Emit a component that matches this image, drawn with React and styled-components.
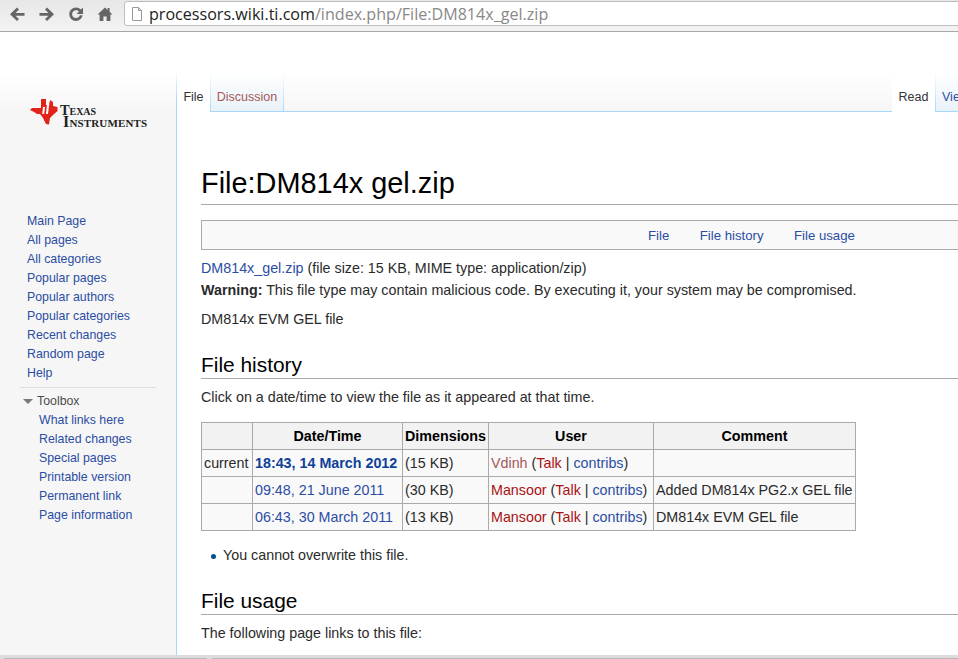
import React from 'react';
import styled, { createGlobalStyle } from 'styled-components';

const GlobalStyle = createGlobalStyle`
	html, body {
		margin: 0;
		padding: 0;
		background: #fff;
	}
`;

const Page = styled.div`
	display: flex;
	flex-direction: column;
	width: 958px;
	height: 659px;
	overflow: hidden;
	font-family: "Liberation Sans", Arial, sans-serif;
	font-size: 14.3px;
	color: #2a2a2a;
`;

const Toolbar = styled.div`
	display: flex;
	align-items: center;
	flex: none;
	height: 32px;
	box-sizing: border-box;
	padding: 0 0 4px 9px;
	background: linear-gradient(#e7e7e7, #f3f3f3);
	border-bottom: 1px solid #a8a8a8;
`;

const ToolButton = styled.svg`
	flex: none;
	width: 16px;
	height: 16px;
	margin-right: ${p => p.$gap}px;
	fill: #666;
`;

const AddressBar = styled.div`
	display: flex;
	align-items: center;
	flex: 1;
	height: 25px;
	box-sizing: border-box;
	padding-left: 6px;
	margin-right: -6px;
	background: #fff;
	border: 1px solid #bdbdbd;
	border-radius: 3px;
`;

const PageIcon = styled.svg`
	flex: none;
	width: 12px;
	height: 14px;
	margin-right: 6px;
`;

const Url = styled.span`
	font-family: "Open Sans", sans-serif;
	font-size: 16.1px;
	color: #888;
	white-space: nowrap;
`;

const Host = styled.span`
	color: #222;
`;

const Body = styled.div`
	display: flex;
	flex: 1;
	min-height: 0;
`;

const Sidebar = styled.div`
	flex: none;
	width: 177px;
	padding-top: 65px;
	box-sizing: border-box;
	background: linear-gradient(#fff 40px, #f6f6f6 80px);
	border-right: 1px solid #a7d7f9;
	border-image: linear-gradient(#fff 38px, #a7d7f9 70px) 1;
`;

const Logo = styled.div`
	display: flex;
	align-items: center;
	height: 32px;
	padding-left: 30px;
	margin-bottom: 83px;
`;

const LogoMark = styled.svg`
	flex: none;
	width: 29px;
	height: 27px;
	margin-top: -3px;
`;

const LogoText = styled.div`
	margin: 5px 0 0 1px;
	font-family: "Liberation Serif", serif;
	font-weight: bold;
	font-variant: small-caps;
	line-height: 12px;
	color: #222;
	white-space: nowrap;
`;

const LogoLine = styled.div`
	margin-left: ${p => p.$indent}px;
	font-size: ${p => p.$size}px;
	letter-spacing: ${p => p.$track}px;
`;

const NavList = styled.div`
	display: flex;
	flex-direction: column;
	padding-left: ${p => p.$indent}px;
`;

const NavLink = styled.a`
	height: 19px;
	font-size: 12.35px;
	line-height: 19px;
	color: #2b4da3;
	white-space: nowrap;
`;

const Divider = styled.div`
	height: 1px;
	margin: 4px 20px 5px 20px;
	background: #dedede;
`;

const ToolboxHead = styled.div`
	display: flex;
	align-items: center;
	height: 16px;
	padding: 0 0 2px 23px;
	font-size: 12.35px;
	color: #4d4d4d;
`;

const Arrow = styled.span`
	width: 0;
	height: 0;
	margin: 1px 4px 0 0;
	border-top: 5px solid #797979;
	border-left: 5px solid transparent;
	border-right: 5px solid transparent;
`;

const Main = styled.div`
	flex: none;
	width: 1100px;
`;

const Tabs = styled.div`
	display: flex;
	align-items: flex-end;
	height: 80px;
	box-sizing: border-box;
	background: linear-gradient(#fff 50%, #f6f6f6);
	border-bottom: 1px solid #a7d7f9;
`;

const Tab = styled.div`
	display: flex;
	align-items: center;
	flex: none;
	box-sizing: content-box;
	width: ${p => p.$width}px;
	height: 28px;
	padding-top: 10px;
	margin-left: ${p => p.$left || 0}px;
	margin-bottom: ${p => p.$active ? '-1px' : '0'};
	padding-bottom: ${p => p.$active ? '1px' : '0'};
	justify-content: ${p => p.$cut ? 'flex-start' : 'center'};
	padding-left: ${p => p.$cut ? '6px' : '0'};
	font-size: 12.5px;
	white-space: nowrap;
	color: ${p => p.$active ? '#333' : p.$missing ? '#a55858' : '#2b4da3'};
	background: ${p => p.$active ? '#fff' : 'linear-gradient(#fff, #e8f2f8)'};
	border-left: 1px solid transparent;
	border-right: 1px solid transparent;
	border-image: ${p => p.$active ? 'none' : 'linear-gradient(#fff, #a7d7f9) 1'};
`;

const Content = styled.div`
	padding: 52px 0 0 24px;
`;

const Title = styled.h1`
	margin: 0 0 15px;
	height: 40px;
	font-size: 28.9px;
	font-weight: normal;
	line-height: 38px;
	color: #000;
	border-bottom: 1px solid #aaa;
`;

const FileToc = styled.div`
	display: flex;
	gap: 30.5px;
	height: 30px;
	box-sizing: border-box;
	padding-left: 446px;
	margin-bottom: 9px;
	font-size: 13.2px;
	line-height: 29px;
	background: #f9f9f9;
	border: 1px solid #aaa;
`;

const Link = styled.a`
	color: ${p => p.$missing ? '#a55858' : p.$red ? '#a11' : p.$bold ? '#0f3f99' : '#2b4da3'};
	font-weight: ${p => p.$bold ? 'bold' : 'normal'};
`;

const Para = styled.p`
	margin: 0 0 ${p => p.$bottom}px;
	height: 19px;
	line-height: 19px;
	white-space: nowrap;
`;

const Section = styled.h2`
	height: 26px;
	margin: 0 0 9px;
	font-size: 20.9px;
	font-weight: normal;
	line-height: 26px;
	color: #000;
	border-bottom: 1px solid #aaa;
`;

const HistoryTable = styled.table`
	border-collapse: collapse;
	table-layout: fixed;
	width: 654px;
	margin: 15px 0 15px;
	background: #f9f9f9;

	th, td {
		height: 27px;
		box-sizing: border-box;
		padding: 0 2px;
		border: 1px solid #aaa;
		white-space: nowrap;
	}

	th {
		background: #f2f2f2;
		font-weight: bold;
		text-align: center;
		color: #000;
	}
`;

const Notes = styled.ul`
	margin: 0 0 23px;
	padding: 0 0 0 22px;
	height: 19px;
	line-height: 19px;
	list-style: none;
`;

const Note = styled.li`
	position: relative;

	&::before {
		content: '';
		position: absolute;
		left: -12px;
		top: 8px;
		width: 5px;
		height: 5px;
		border-radius: 50%;
		background: #00528c;
	}
`;

const ScrollBar = styled.div`
	display: flex;
	flex: none;
	gap: 5px;
	height: 4px;
	padding-left: 4px;
	box-sizing: border-box;
	background: #dcdcdc;
`;

const ScrollThumb = styled.div`
	flex: none;
	width: ${p => p.$width}px;
	margin-top: 3px;
	background: #b8b8b8;
`;

const mainNav = ['Main Page', 'All pages', 'All categories', 'Popular pages', 'Popular authors', 'Popular categories', 'Recent changes', 'Random page', 'Help'];
const toolNav = ['What links here', 'Related changes', 'Special pages', 'Printable version', 'Permanent link', 'Page information'];

const revisions = [
	{ label: 'current', date: '18:43, 14 March 2012', size: '(15 KB)', user: 'Vdinh', userMissing: true, comment: '', bold: true },
	{ label: '', date: '09:48, 21 June 2011', size: '(30 KB)', user: 'Mansoor', comment: 'Added DM814x PG2.x GEL file' },
	{ label: '', date: '06:43, 30 March 2011', size: '(13 KB)', user: 'Mansoor', comment: 'DM814x EVM GEL file' }
];

function App() {
	return (
		<Page>
			<GlobalStyle />
			<Toolbar>
				<ToolButton $gap={14} viewBox="0 0 16 16">
					<path d="M8 1.5 L10 3.5 L6.5 7 H15.5 V9.7 H6.5 L10 13 L8 15 L1 8.3 Z" />
				</ToolButton>
				<ToolButton $gap={13} viewBox="0 0 16 16">
					<path d="M8 1.5 L6 3.5 L9.5 7 H.5 V9.7 H9.5 L6 13 L8 15 L15 8.3 Z" />
				</ToolButton>
				<ToolButton $gap={13} viewBox="0 0 16 16">
					<path d="M8 1.5 C10 1.5 11.6 2.3 12.8 3.6 L15 1.5 V8 H8.7 L10.9 5.6 C10.2 4.8 9.2 4.3 8 4.3 C5.8 4.3 4.1 6 4.1 8.2 C4.1 10.4 5.8 12.1 8 12.1 C9.8 12.1 11.3 11 11.8 9.3 H14.6 C14 12.5 11.3 14.9 8 14.9 C4.2 14.9 1.3 11.9 1.3 8.2 C1.3 4.5 4.2 1.5 8 1.5 Z" />
				</ToolButton>
				<ToolButton $gap={11} viewBox="0 0 16 16">
					<path d="M8 1.5 L10.6 3.9 V2 H12.6 V5.8 L15.5 8.6 H13.4 V15 H9.6 V10.5 H6.4 V15 H2.6 V8.6 H.5 Z" />
				</ToolButton>
				<AddressBar>
					<PageIcon viewBox="0 0 12 14">
						<path d="M1.5 .5 H7.5 L10.5 3.5 V13.5 H1.5 Z M7.5 .5 V3.5 H10.5" fill="#fff" stroke="#999" />
					</PageIcon>
					<Url><Host>processors.wiki.ti.com</Host>/index.php/File:DM814x_gel.zip</Url>
				</AddressBar>
			</Toolbar>
			<Body>
				<Sidebar>
					<Logo>
						<LogoMark viewBox="0 0 29 27">
							<path d="M11 1 H16 V7 L19 7 L20 2 L23 4 V8 L27.5 9 L27.5 13 L23 17 L20 20 L19 26.5 L16 26 L13 20 L10 16 L7 16 L4 14 L0 12 L2 10 H11 Z" fill="#e2231a" />
							<path d="M13 9 H15 L14.2 16 H12.2 Z M17 6 H19.2 L18 16 H16 Z" fill="#fff" />
						</LogoMark>
						<LogoText>
							<LogoLine $indent={0} $size={14.5} $track={-0.1}>Texas</LogoLine>
							<LogoLine $indent={3} $size={16} $track={0.15}>Instruments</LogoLine>
						</LogoText>
					</Logo>
					<NavList $indent={27}>
						{mainNav.map(item => <NavLink key={item}>{item}</NavLink>)}
					</NavList>
					<Divider />
					<ToolboxHead><Arrow />Toolbox</ToolboxHead>
					<NavList $indent={39}>
						{toolNav.map(item => <NavLink key={item}>{item}</NavLink>)}
					</NavList>
				</Sidebar>
				<Main>
					<Tabs>
						<Tab $active $width={31}>File</Tab>
						<Tab $missing $width={72}>Discussion</Tab>
						<Tab $active $left={608} $width={41}>Read</Tab>
						<Tab $cut $width={80}>View source</Tab>
					</Tabs>
					<Content>
						<Title>File:DM814x gel.zip</Title>
						<FileToc>
							<Link>File</Link>
							<Link>File history</Link>
							<Link>File usage</Link>
						</FileToc>
						<Para $bottom={3}><Link>DM814x_gel.zip</Link> (file size: 15 KB, MIME type: application/zip)</Para>
						<Para $bottom={10}><b>Warning:</b> This file type may contain malicious code. By executing it, your system may be compromised.</Para>
						<Para $bottom={23}>DM814x EVM GEL file</Para>
						<Section>File history</Section>
						<Para $bottom={0}>Click on a date/time to view the file as it appeared at that time.</Para>
						<HistoryTable>
							<colgroup>
								<col width="51" />
								<col width="150" />
								<col width="86" />
								<col width="165" />
								<col width="202" />
							</colgroup>
							<thead>
								<tr>
									<th></th>
									<th>Date/Time</th>
									<th>Dimensions</th>
									<th>User</th>
									<th>Comment</th>
								</tr>
							</thead>
							<tbody>
								{revisions.map(rev => (
									<tr key={rev.date}>
										<td>{rev.label}</td>
										<td><Link $bold={rev.bold}>{rev.date}</Link></td>
										<td>{rev.size}</td>
										<td>
											<Link $missing={rev.userMissing} $red={!rev.userMissing}>{rev.user}</Link> (<Link $red>Talk</Link> | <Link>contribs</Link>)
										</td>
										<td>{rev.comment}</td>
									</tr>
								))}
							</tbody>
						</HistoryTable>
						<Notes><Note>You cannot overwrite this file.</Note></Notes>
						<Section>File usage</Section>
						<Para $bottom={0}>The following page links to this file:</Para>
					</Content>
				</Main>
			</Body>
			<ScrollBar>
				<ScrollThumb $width={203} />
				<ScrollThumb $width={746} />
			</ScrollBar>
		</Page>
	);
}

export default App;
